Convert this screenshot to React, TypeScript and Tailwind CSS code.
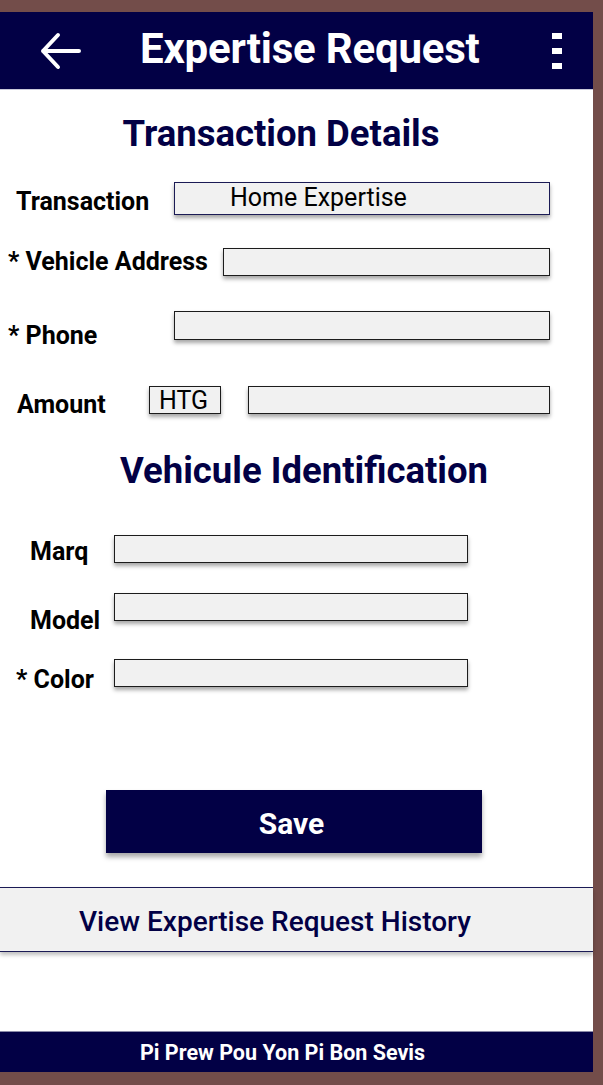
const navy = "bg-[#020045]";

function Field({ className = "", value = "" }: { className?: string; value?: string }) {
  return (
    <div
      className={`h-full border-[1.5px] border-[#1c1c1c] bg-[#f1f1f1] shadow-[0_3px_4px_rgba(0,0,0,0.35)] ${className}`}
    >
      {value}
    </div>
  );
}

export default function App() {
  return (
    <div className="w-[603px] h-[1085px] bg-[#734d4a] pt-[12px] pb-[13px] pr-[10px] font-['Roboto',sans-serif]">
      <div className="h-full bg-white flex flex-col">
        {/* Header */}
        <header className={`${navy} h-[78px] shrink-0 flex items-center border-b border-[#c9c9d9]`}>
          <svg className="ml-[39px] w-[44px] h-[38px]" viewBox="0 0 44 38" fill="none" stroke="white" strokeWidth="4" strokeLinecap="round" strokeLinejoin="round">
            <path d="M40 19H4M19 3L4 19l15 16" />
          </svg>
          <h1 className="ml-[57px] text-[42px] leading-none font-bold text-white tracking-[-0.2px] mb-[4px]">Expertise Request</h1>
          <div className="ml-auto mr-[31px] flex flex-col gap-[9px]">
            <span className="block w-[10px] h-[6px] bg-white" />
            <span className="block w-[10px] h-[6px] bg-white" />
            <span className="block w-[10px] h-[6px] bg-white" />
          </div>
        </header>

        {/* Transaction details */}
        <h2 className="mt-[26px] text-center pr-[31px] text-[36.5px] leading-none font-bold text-[#020045]">Transaction Details</h2>

        <div className="mt-[29px] h-[33px] flex items-start">
          <div className="w-[174px] pl-[16px] mt-[7px] text-[25px] leading-none font-bold text-black">Transaction</div>
          <div className="w-[376px] h-full border-[1.5px] border-[#1b1b55] bg-[#f1f1f1] shadow-[0_3px_4px_rgba(0,0,0,0.35)] pl-[55px] text-[25px] leading-[29px] text-black">
            Home Expertise
          </div>
        </div>

        <div className="mt-[33px] h-[28px] flex items-start">
          <div className="w-[223px] pl-[8px] mt-[1px] text-[25px] leading-none font-bold text-black">* Vehicle Address</div>
          <Field className="w-[327px]" />
        </div>

        <div className="mt-[35px] h-[29px] flex items-start">
          <div className="w-[174px] pl-[8px] mt-[12px] text-[25px] leading-none font-bold text-black">* Phone</div>
          <Field className="w-[376px]" />
        </div>

        <div className="mt-[46px] h-[28px] flex items-start">
          <div className="w-[149px] pl-[17px] mt-[6px] text-[25px] leading-none font-bold text-black">Amount</div>
          <Field className="w-[72px] pl-[9px] text-[25px] leading-[27px] text-black" value="HTG" />
          <Field className="ml-[27px] w-[302px]" />
        </div>

        {/* Vehicle identification */}
        <h2 className="mt-[39px] text-center pl-[15px] text-[36.5px] leading-none font-bold text-[#020045]">Vehicule Identification</h2>

        <div className="mt-[46px] h-[28px] flex items-start">
          <div className="w-[114px] pl-[30px] mt-[4px] text-[25px] leading-none font-bold text-black">Marq</div>
          <Field className="w-[354px]" />
        </div>

        <div className="mt-[30px] h-[28px] flex items-start">
          <div className="w-[114px] pl-[30px] mt-[15px] text-[25px] leading-none font-bold text-black">Model</div>
          <Field className="w-[354px]" />
        </div>

        <div className="mt-[38px] h-[28px] flex items-start">
          <div className="w-[114px] pl-[16px] mt-[8px] text-[25px] leading-none font-bold text-black">* Color</div>
          <Field className="w-[354px]" />
        </div>

        <button className={`mt-[103px] ml-[106px] w-[376px] h-[63px] pr-[5px] pt-[4px] ${navy} text-white text-[30px] font-bold shadow-[0_4px_5px_rgba(0,0,0,0.35)]`}>
          Save
        </button>

        <div className="mt-[34px] h-[65px] flex items-center justify-center pr-[43px] pt-[5px] bg-[#f1f1f1] border-y-[1.5px] border-[#1b1b55] shadow-[0_3px_4px_rgba(0,0,0,0.25)] text-[28px] font-medium text-[#020045]">
          View Expertise Request History
        </div>

        <footer className={`mt-auto h-[41px] ${navy} flex items-center justify-center pr-[28px] pt-[2px] border-t border-[#8a8aa8] text-[21.5px] font-bold text-white`}>
          Pi Prew Pou Yon Pi Bon Sevis
        </footer>
      </div>
    </div>
  );
}
